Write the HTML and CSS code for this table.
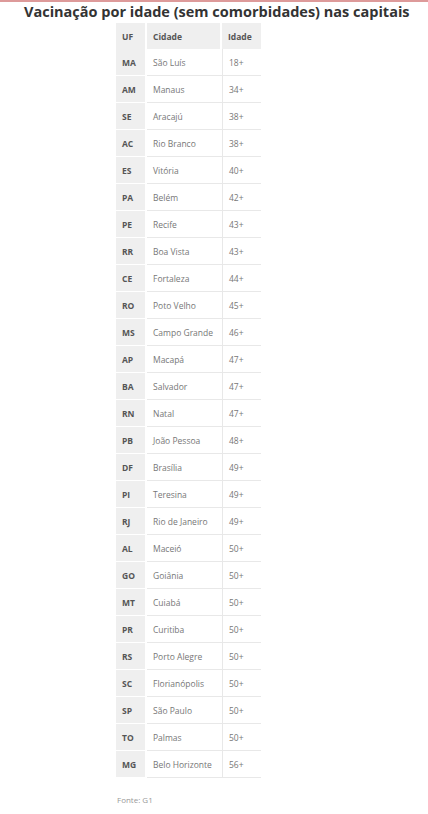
FILE: index.html
```html
<!DOCTYPE html>
<html lang="pt-BR">
<head>
    <meta charset="UTF-8">
    <meta name="viewport" content="width=device-width, initial-scale=1.0">
    <title>Vacinação por idade</title>
    <link rel="stylesheet" href="styles.css">
</head>
<body>
    <div class="page">
        <h1>Vacinação por idade (sem comorbidades) nas capitais</h1>
        <table class="capitais">
            <thead>
                <tr><th class="uf">UF</th><th class="cidade">Cidade</th><th class="idade">Idade</th></tr>
            </thead>
            <tbody>
                <tr><td class="uf">MA</td><td class="cidade">São Luís</td><td class="idade">18+</td></tr>
                <tr><td class="uf">AM</td><td class="cidade">Manaus</td><td class="idade">34+</td></tr>
                <tr><td class="uf">SE</td><td class="cidade">Aracajú</td><td class="idade">38+</td></tr>
                <tr><td class="uf">AC</td><td class="cidade">Rio Branco</td><td class="idade">38+</td></tr>
                <tr><td class="uf">ES</td><td class="cidade">Vitória</td><td class="idade">40+</td></tr>
                <tr><td class="uf">PA</td><td class="cidade">Belém</td><td class="idade">42+</td></tr>
                <tr><td class="uf">PE</td><td class="cidade">Recife</td><td class="idade">43+</td></tr>
                <tr><td class="uf">RR</td><td class="cidade">Boa Vista</td><td class="idade">43+</td></tr>
                <tr><td class="uf">CE</td><td class="cidade">Fortaleza</td><td class="idade">44+</td></tr>
                <tr><td class="uf">RO</td><td class="cidade">Poto Velho</td><td class="idade">45+</td></tr>
                <tr><td class="uf">MS</td><td class="cidade">Campo Grande</td><td class="idade">46+</td></tr>
                <tr><td class="uf">AP</td><td class="cidade">Macapá</td><td class="idade">47+</td></tr>
                <tr><td class="uf">BA</td><td class="cidade">Salvador</td><td class="idade">47+</td></tr>
                <tr><td class="uf">RN</td><td class="cidade">Natal</td><td class="idade">47+</td></tr>
                <tr><td class="uf">PB</td><td class="cidade">João Pessoa</td><td class="idade">48+</td></tr>
                <tr><td class="uf">DF</td><td class="cidade">Brasília</td><td class="idade">49+</td></tr>
                <tr><td class="uf">PI</td><td class="cidade">Teresina</td><td class="idade">49+</td></tr>
                <tr><td class="uf">RJ</td><td class="cidade">Rio de Janeiro</td><td class="idade">49+</td></tr>
                <tr><td class="uf">AL</td><td class="cidade">Maceió</td><td class="idade">50+</td></tr>
                <tr><td class="uf">GO</td><td class="cidade">Goiânia</td><td class="idade">50+</td></tr>
                <tr><td class="uf">MT</td><td class="cidade">Cuiabá</td><td class="idade">50+</td></tr>
                <tr><td class="uf">PR</td><td class="cidade">Curitiba</td><td class="idade">50+</td></tr>
                <tr><td class="uf">RS</td><td class="cidade">Porto Alegre</td><td class="idade">50+</td></tr>
                <tr><td class="uf">SC</td><td class="cidade">Florianópolis</td><td class="idade">50+</td></tr>
                <tr><td class="uf">SP</td><td class="cidade">São Paulo</td><td class="idade">50+</td></tr>
                <tr><td class="uf">TO</td><td class="cidade">Palmas</td><td class="idade">50+</td></tr>
                <tr><td class="uf">MG</td><td class="cidade">Belo Horizonte</td><td class="idade">56+</td></tr>
            </tbody>
        </table>
        <p class="fonte">Fonte: G1</p>
    </div>
</body>
</html>
```

FILE: styles.css
```css
body {
    margin: 0;
    padding: 0;
    font-family: "Open Sans", Arial, sans-serif;
    background: #fff;
    color: #555;
}
.page {
    border-top: 2px solid #dd9a9a;
    padding: 0 0 0 24px;
}
h1 {
    margin: 0 0 1px;
    font-size: 14.5px;
    font-weight: bold;
    line-height: 20px;
    color: #333;
}
.capitais {
    margin-left: 92px;
    border-collapse: separate;
    border-spacing: 0;
    font-size: 8.5px;
}
.capitais th {
    background: #efefef;
    height: 26px;
    padding: 0 6px;
    text-align: left;
    font-weight: bold;
    color: #555;
    border-right: 2px solid #fff;
}
.capitais th.idade {
    border-right: none;
}
.capitais td {
    height: 26px;
    padding: 0 6px;
    border-bottom: 1px solid #e8e8e8;
    color: #777;
}
.capitais td.uf {
    background: #efefef;
    border-bottom-color: #fff;
    border-right: 2px solid #fff;
    font-weight: bold;
    color: #555;
}
.capitais .uf {
    width: 17px;
}
.capitais .cidade {
    width: 61px;
}
.capitais td.idade {
    border-left: 1px solid #e8e8e8;
    width: 26px;
}
.fonte {
    margin: 16px 0 0 93px;
    font-size: 8px;
    color: #999;
}
```
